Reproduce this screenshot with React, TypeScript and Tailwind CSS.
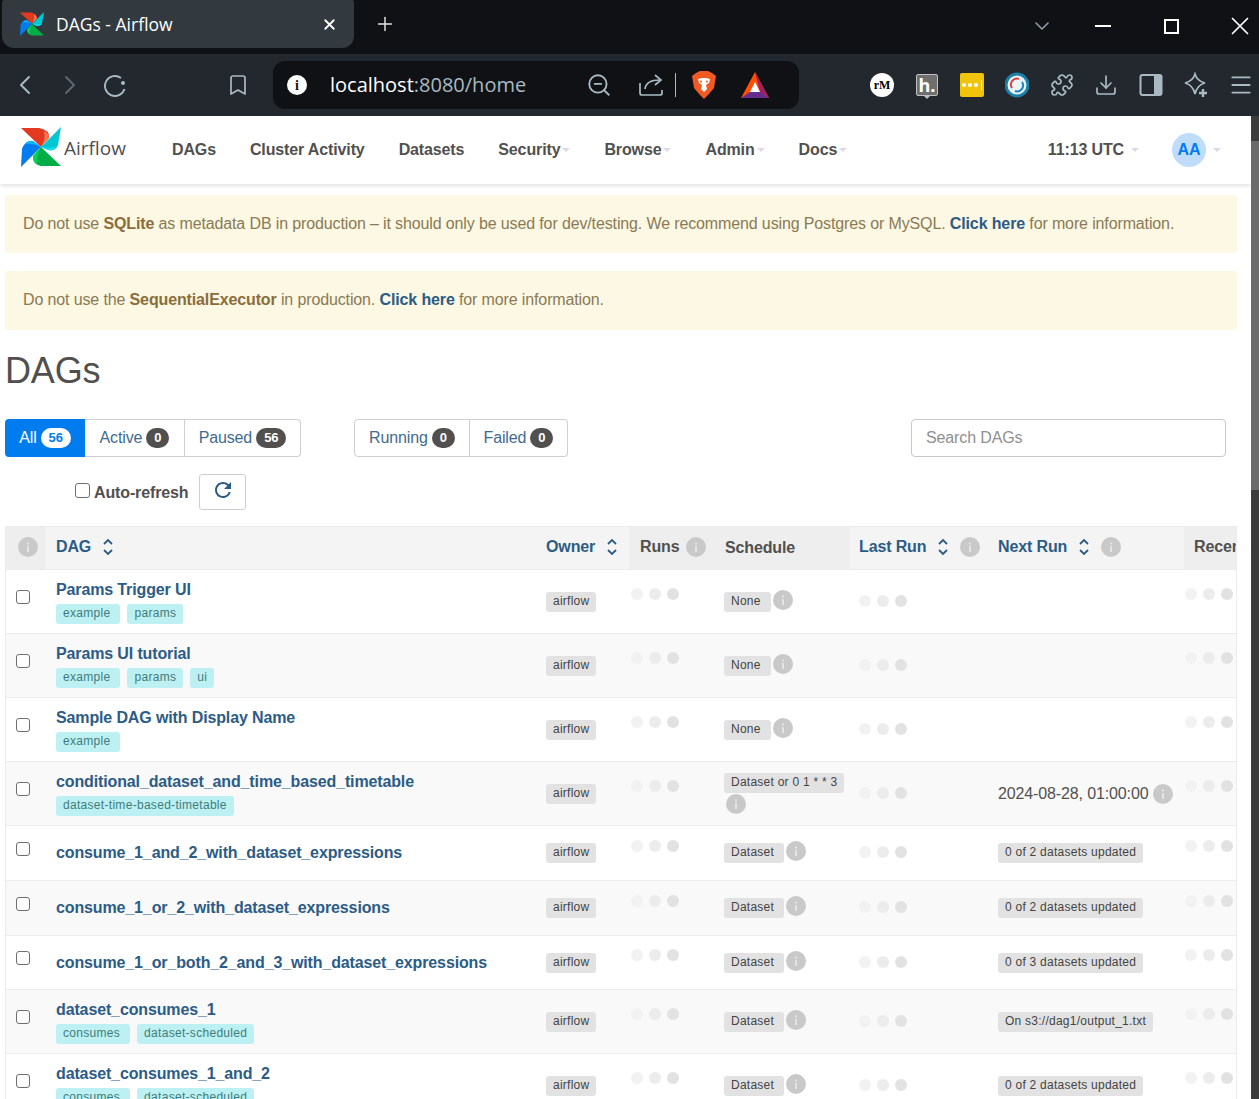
import { Plus, X, ChevronLeft, ChevronRight, ChevronDown, Bookmark, ZoomOut, Puzzle, Download, Menu } from 'lucide-react'

const ROWS = [
  { name: 'Params Trigger UI', tags: ['example', 'params'], schedule: 'None', h: 'h-[64px]' },
  { name: 'Params UI tutorial', tags: ['example', 'params', 'ui'], schedule: 'None', h: 'h-[64px]' },
  { name: 'Sample DAG with Display Name', tags: ['example'], schedule: 'None', h: 'h-[64px]' },
  { name: 'conditional_dataset_and_time_based_timetable', tags: ['dataset-time-based-timetable'], schedule: 'Dataset or 0 1 * * 3', next: '2024-08-28, 01:00:00', h: 'h-[64px]' },
  { name: 'consume_1_and_2_with_dataset_expressions', tags: [], schedule: 'Dataset', nextLabel: '0 of 2 datasets updated', h: 'h-[55px]' },
  { name: 'consume_1_or_2_with_dataset_expressions', tags: [], schedule: 'Dataset', nextLabel: '0 of 2 datasets updated', h: 'h-[55px]' },
  { name: 'consume_1_or_both_2_and_3_with_dataset_expressions', tags: [], schedule: 'Dataset', nextLabel: '0 of 3 datasets updated', h: 'h-[54px]' },
  { name: 'dataset_consumes_1', tags: ['consumes', 'dataset-scheduled'], schedule: 'Dataset', nextLabel: 'On s3://dag1/output_1.txt', h: 'h-[64px]' },
  { name: 'dataset_consumes_1_and_2', tags: ['consumes', 'dataset-scheduled'], schedule: 'Dataset', nextLabel: '0 of 2 datasets updated', h: 'h-[64px]' },
]

const COLS = 'grid grid-cols-[40px_490px_94px_85px_134px_139px_196px_1fr]'

function Pinwheel({ size }: { size: number }) {
  return (
    <svg width={size} height={size} viewBox="0 0 40 40" className="shrink-0">
      <path d="M0 1 L18 1 Q29 3 28 11 L20 20 Z" fill="#e43921" />
      <path d="M20 20 L28 11 Q28 6 23 4 Q25 12 20 20 Z" fill="#ff7557" />
      <path d="M40 0 L37 18 Q34 25 27 23 L20 20 Z" fill="#00c7d4" />
      <path d="M20 20 L27 23 Q33 24 36 20 Q28 22 20 20 Z" fill="#11e1ee" />
      <path d="M0 40 L1 22 Q4 13 12 14 L20 20 Z" fill="#017cee" />
      <path d="M20 20 L12 14 Q7 13 4 17 Q12 16 20 20 Z" fill="#0cb6ff" />
      <path d="M40 39 L20 39 Q11 37 12 29 L20 20 Z" fill="#00ad46" />
      <path d="M20 20 L12 29 Q12 34 16 37 Q15 28 20 20 Z" fill="#04d659" />
    </svg>
  )
}

function Info() {
  return (
    <svg width="20" height="20" viewBox="0 0 20 20" className="shrink-0">
      <circle cx="10" cy="10" r="10" fill="#c9c9c9" />
      <rect x="9" y="9" width="2" height="6" fill="#e4e4e4" />
      <rect x="9" y="5.5" width="2" height="2" fill="#e4e4e4" />
    </svg>
  )
}

function Sort() {
  return (
    <svg width="12" height="20" viewBox="0 0 12 20" className="shrink-0" fill="none" stroke="#2c5c86" strokeWidth="1.8">
      <path d="M2 7 L6 3 L10 7" />
      <path d="M2 13 L6 17 L10 13" />
    </svg>
  )
}

function Caret() {
  return <span className="ml-[2px] inline-block h-0 w-0 border-x-[4px] border-t-[4px] border-x-transparent border-t-[#e0d8e6]" />
}

function Dots() {
  return (
    <div className="flex gap-[6px]">
      <span className="h-3 w-3 rounded-full bg-[#f2f2f2]" />
      <span className="h-3 w-3 rounded-full bg-[#ececec]" />
      <span className="h-3 w-3 rounded-full bg-[#e2e2e2]" />
    </div>
  )
}

function Label({ text, extra }: { text: string; extra?: boolean }) {
  return (
    <span className={`inline-block h-5 whitespace-nowrap rounded-[3px] bg-[#e2e2e2] pl-[7px] text-[12px] leading-[19px] tracking-[0.25px] text-[#444] ${extra ? 'pr-[10px]' : 'pr-[7px]'}`}>
      {text}
    </span>
  )
}

function Count({ value, light }: { value: number; light?: boolean }) {
  return (
    <span className={`ml-1 inline-block h-5 rounded-full px-[8px] text-[13px] font-bold leading-5 ${light ? 'bg-white text-[#017cee]' : 'bg-[#51504f] text-white'}`}>
      {value}
    </span>
  )
}

function FilterButton({ text, value, active, className }: { text: string; value: number; active?: boolean; className: string }) {
  return (
    <div className={`flex h-[38px] items-center justify-center text-[16px] ${active ? 'bg-[#017cee] text-white' : 'border-y border-[#cfcfcf] text-[#3f6b90]'} ${className}`}>
      {text}
      <Count value={value} light={active} />
    </div>
  )
}

function Tab() {
  return (
    <div className="flex h-[54px] items-start bg-[#0f1115] text-white">
      <div className="ml-[2px] flex h-[48px] w-[352px] items-center rounded-b-[12px] rounded-t-[2px] bg-[#32393f] pl-[18px] pr-[16px]">
        <Pinwheel size={24} />
        <span className="ml-[12px] flex-1 text-[17.5px]">DAGs - Airflow</span>
        <X size={17} strokeWidth={2.6} />
      </div>
      <Plus size={22} strokeWidth={1.6} className="ml-[20px] mt-[13px] text-[#e6e6e6]" />
      <div className="ml-auto flex items-center pt-[11px]">
        <ChevronDown size={24} strokeWidth={1.6} className="mr-[41px] text-[#8e9aa3]" />
        <span className="mr-[53px] h-[2px] w-4 bg-white" />
        <span className="mr-[46px] h-[15px] w-[15px] border-2 border-white" />
        <X size={30} strokeWidth={1.4} className="mr-[4px]" />
      </div>
    </div>
  )
}

function BraveIcon() {
  return (
    <svg width="24" height="28" viewBox="0 0 24 28">
      <path d="M4 2 L8 0 H16 L20 2 L24 5 L22 17 L16 24 L12 28 L8 24 L2 17 L0 5 Z" fill="#f15a22" />
      <path d="M6 8 L10 7 H14 L18 8 L17 12 L14 14 L15 18 L12 21 L9 18 L10 14 L7 12 Z" fill="#fff" />
      <circle cx="9" cy="10.5" r="1" fill="#f15a22" />
      <circle cx="15" cy="10.5" r="1" fill="#f15a22" />
    </svg>
  )
}

function BatIcon() {
  return (
    <svg width="28" height="26" viewBox="0 0 28 26">
      <path d="M14 0 L28 26 H0 Z" fill="#ff5000" />
      <path d="M14 0 L28 26 L19 20 Z" fill="#9e1f63" />
      <path d="M0 26 L9 20 H19 L28 26 Z" fill="#662d91" />
      <path d="M14 10 L19 20 H9 Z" fill="#fff" />
    </svg>
  )
}

function SidebarIcon() {
  return (
    <svg width="24" height="24" viewBox="0 0 24 24">
      <rect x="1.5" y="2" width="21" height="20" rx="2" fill="none" stroke="#a9bac3" strokeWidth="2" />
      <rect x="15" y="2" width="8" height="20" rx="1" fill="#a9bac3" />
    </svg>
  )
}

function SparkIcon() {
  return (
    <svg width="26" height="26" viewBox="0 0 26 26" fill="none" stroke="#a9bac3" strokeWidth="1.7" className="-ml-[1px]">
      <path d="M12 2 Q14 9 22 11 Q14 13 12 22 Q10 13 2 11 Q10 9 12 2 Z" />
      <path d="M20 17 V25 M16 21 H24" strokeWidth="2.4" />
    </svg>
  )
}

function ReloadIcon() {
  return (
    <svg width="24" height="24" viewBox="0 0 24 24" fill="none" stroke="#a9bac3" strokeWidth="1.9" className="ml-[17px]">
      <path d="M18 5 A10 10 0 1 0 21.5 16" />
      <circle cx="20" cy="10" r="2" fill="#a9bac3" stroke="none" />
    </svg>
  )
}

function ShareIcon() {
  return (
    <svg width="26" height="24" viewBox="0 0 26 24" fill="none" stroke="#a9bac3" strokeWidth="1.7" className="ml-[26px]">
      <path d="M2 10 V20 Q2 22 4 22 H22 Q24 22 24 20 V17" />
      <path d="M7 16 Q8 7 22 7" />
      <path d="M17 2 L23 7 L17 12" />
    </svg>
  )
}

function Toolbar() {
  return (
    <div className="flex h-[62px] items-center bg-[#22282d] text-[#a9bac3]">
      <ChevronLeft size={32} strokeWidth={1.5} className="ml-[9px]" />
      <ChevronRight size={32} strokeWidth={1.5} className="ml-[13px] text-[#5d6870]" />
      <ReloadIcon />
      <Bookmark size={24} strokeWidth={1.7} className="ml-[99px]" />
      <div className="ml-[23px] flex h-[48px] w-[526px] items-center rounded-[12px] bg-[#0f1115] pl-[14px]">
        <span className="flex h-5 w-5 items-center justify-center rounded-full bg-white font-['Liberation_Serif',serif] text-[14px] font-bold text-[#0f1115]">i</span>
        <span className="ml-[23px] w-[256px] text-[20px] text-[#a9bac3]"><span className="text-white">localhost</span>:8080/home</span>
        <ZoomOut size={26} strokeWidth={1.7} />
        <ShareIcon />
        <span className="ml-[11px] h-6 w-px bg-[#a9bac3]" />
        <span className="ml-[16px]"><BraveIcon /></span>
        <span className="ml-[25px]"><BatIcon /></span>
      </div>
      <div className="ml-[71px] flex items-center gap-[21px]">
        <span className="flex h-6 w-6 items-center justify-center rounded-full bg-white font-['Liberation_Serif',serif] text-[12px] font-bold text-black">rM</span>
        <span className="relative mx-px flex h-[22px] w-[22px] items-center justify-center rounded-[2px] border border-[#c0c0c0] bg-[#6f6f6f] text-[18px] font-bold text-white">
          h.
          <i className="absolute -bottom-[4px] left-[7px] h-0 w-0 border-x-[3px] border-t-[3px] border-x-transparent border-t-[#c0c0c0]" />
        </span>
        <span className="flex h-6 w-6 items-center justify-center gap-[2px] rounded-[2px] bg-[#f0c40c]">
          <i className="h-1 w-1 rounded-full bg-white" />
          <i className="h-1 w-1 rounded-full bg-white" />
          <i className="h-1 w-1 rounded-full bg-white" />
          <i className="ml-[1px] h-[10px] w-px bg-white" />
        </span>
        <svg width="24" height="26" viewBox="0 0 24 26" fill="none">
          <circle cx="12" cy="13" r="11" fill="#e8f4f8" stroke="#1b7fa8" strokeWidth="3" />
          <path d="M7 16 A6 6 0 0 1 14 7" stroke="#d8433b" strokeWidth="2" />
          <path d="M17 10 A6 6 0 0 1 10 19" stroke="#1f83c4" strokeWidth="2" />
        </svg>
        <Puzzle size={24} strokeWidth={1.7} />
        <Download size={24} strokeWidth={1.7} className="-ml-[1px]" />
        <SidebarIcon />
        <SparkIcon />
        <Menu size={26} strokeWidth={1.7} className="-ml-[2px]" />
      </div>
    </div>
  )
}

function NavBar() {
  const items = [['DAGs'], ['Cluster Activity'], ['Datasets'], ['Security', 1], ['Browse', 1], ['Admin', 1], ['Docs', 1]] as const
  return (
    <div className="flex h-[68px] items-center bg-white shadow-[0_2px_4px_rgba(0,0,0,0.12)]">
      <div className="ml-[21px] flex w-[151px] items-center">
        <span className="mb-[6px]"><Pinwheel size={40} /></span>
        <span className="mb-[3px] ml-[3px] font-['Open_Sans',sans-serif] text-[19px] tracking-normal text-[#51504f]">Airflow</span>
      </div>
      <div className="flex items-center gap-[34px] text-[16px] font-bold text-[#51504f]">
        {items.map(([t, c]) => (
          <span key={t} className="flex items-center">{t}{c && <Caret />}</span>
        ))}
      </div>
      <span className="ml-auto flex items-center text-[16px] font-bold text-[#51504f]">11:13 UTC<span className="ml-[5px] flex"><Caret /></span></span>
      <span className="ml-[33px] flex h-[34px] w-[34px] items-center justify-center rounded-full bg-[#bfdcfb] text-[16px] font-bold text-[#017cee]">AA</span>
      <span className="ml-[5px] mr-[30px] flex"><Caret /></span>
    </div>
  )
}

function Alert({ className, children }: { className: string; children: React.ReactNode }) {
  return (
    <div className={`mx-[5px] flex w-[1232px] items-center rounded-[4px] bg-[#fcf8e3] pl-[18px] text-[16px] text-[#8a7a55] ${className}`}>
      <p>{children}</p>
    </div>
  )
}

function Th({ text, sort, info, dark, className }: { text: string; sort?: boolean; info?: boolean; dark?: boolean; className?: string }) {
  return (
    <div className={`flex items-center overflow-hidden pl-[10px] text-[16px] font-bold ${dark ? 'bg-[#eeeeee] text-[#51504f]' : 'text-[#2c5c86]'} ${className ?? ''}`}>
      <span className="mb-[2px] flex items-center whitespace-nowrap">
        {text}
        {sort && <span className="ml-[11px]"><Sort /></span>}
        {info && <span className={sort ? 'ml-[11px]' : 'ml-[7px]'}><Info /></span>}
      </span>
    </div>
  )
}

function DagRow({ row, even }: { row: (typeof ROWS)[number]; even: boolean }) {
  return (
    <div className={`${COLS} ${row.h} border-b border-[#ececec] ${even ? 'bg-[#f9f9f9]' : 'bg-white'}`}>
      <div className="flex items-center pl-[10px]">
        <span className="mb-[9px] h-[14px] w-[14px] rounded-[3px] border border-[#6f6f6f] bg-white" />
      </div>
      <div className="flex flex-col justify-center pl-[10px]">
        <div className="text-[16px] font-bold leading-[20px] text-[#2c5c86]">{row.name}</div>
        {row.tags.length > 0 && (
          <div className="mt-[4px] flex gap-[7px]">
            {row.tags.map(t => (
              <span key={t} className={`h-5 rounded-[3px] bg-[#bdf0f2] pl-[7px] text-[12px] leading-[19px] tracking-[0.3px] text-[#3f7d7c] ${t === 'example' || t === 'consumes' ? 'pr-[10px]' : 'pr-[7px]'}`}>{t}</span>
            ))}
          </div>
        )}
      </div>
      <div className="flex items-center pl-[10px]">
        <Label text="airflow" />
      </div>
      <div className="flex items-center pl-[1px]">
        <div className="mb-[15px]"><Dots /></div>
      </div>
      <div className="flex flex-wrap content-center items-center pl-[9px]">
        <Label text={row.schedule} extra={row.schedule.length < 10} />
        <span className={row.schedule.length < 10 ? 'mb-[4px] ml-[2px]' : 'ml-[2px] mt-[1px]'}><Info /></span>
      </div>
      <div className="flex items-center pl-[10px]">
        <div className="mb-[2px]"><Dots /></div>
      </div>
      <div className="flex items-center pl-[10px]">
        {row.next && (
          <span className="flex items-center whitespace-nowrap text-[16px] text-[#51504f]">
            {row.next}
            <span className="ml-[5px]"><Info /></span>
          </span>
        )}
        {row.nextLabel && <Label text={row.nextLabel} />}
      </div>
      <div className="flex items-center pl-[1px]">
        <div className="mb-[15px]"><Dots /></div>
      </div>
    </div>
  )
}

export default function App() {
  return (
    <div className="flex h-[1099px] flex-col overflow-hidden bg-white font-['Open_Sans',sans-serif]">
      <Tab />
      <Toolbar />
      <div className="flex min-h-0 flex-1 font-['Liberation_Sans',Arial,sans-serif] tracking-[-0.13px]">
        <main className="min-w-0 flex-1 overflow-hidden">
          <NavBar />
          <Alert className="mt-[11px] h-[58px]">
            Do not use <strong className="text-[#8a6d3b]">SQLite</strong> as metadata DB in production – it should only be used for dev/testing. We recommend using Postgres or MySQL. <strong className="text-[#2c5c86]">Click here</strong> for more information.
          </Alert>
          <Alert className="mt-[18px] h-[59px] pb-[2px]">
            Do not use the <strong className="text-[#8a6d3b]">SequentialExecutor</strong> in production. <strong className="text-[#2c5c86]">Click here</strong> for more information.
          </Alert>
          <h1 className="ml-[5px] mt-[21px] h-[40px] text-[36px] leading-[40px] text-[#51504f]">DAGs</h1>

          <div className="ml-[5px] mt-[28px] flex items-center">
            <div className="flex">
              <FilterButton text="All" value={56} active className="w-[80px] rounded-l-[4px]" />
              <FilterButton text="Active" value={0} className="w-[100px] border-r" />
              <FilterButton text="Paused" value={56} className="w-[116px] rounded-r-[4px] border-r" />
            </div>
            <div className="ml-[53px] flex">
              <FilterButton text="Running" value={0} className="w-[116px] rounded-l-[4px] border-x" />
              <FilterButton text="Failed" value={0} className="w-[98px] rounded-r-[4px] border-r" />
            </div>
            <div className="ml-[343px] flex h-[38px] w-[315px] items-center rounded-[4px] border border-[#c8c8c8] pl-[14px] text-[16px] text-[#8f8f8f]">
              Search DAGs
            </div>
          </div>

          <div className="ml-[75px] mt-[17px] flex items-center">
            <span className="mb-[3px] h-[15px] w-[15px] rounded-[3px] border border-[#6f6f6f]" />
            <span className="ml-[4px] mt-[2px] text-[16px] font-bold text-[#51504f]">Auto-refresh</span>
            <span className="ml-[11px] flex h-[36px] w-[47px] items-center justify-center rounded-[3px] border border-[#cfcfcf] pb-[5px]">
              <svg width="24" height="24" viewBox="0 0 24 24" fill="#2c5c86">
                <path d="M17.65 6.35A7.958 7.958 0 0 0 12 4c-4.42 0-7.99 3.58-7.99 8s3.57 8 7.99 8c3.73 0 6.84-2.55 7.73-6h-2.08A5.99 5.99 0 0 1 12 18c-3.31 0-6-2.69-6-6s2.69-6 6-6c1.66 0 3.14.69 4.22 1.78L13 11h7V4l-2.35 2.35z" />
              </svg>
            </span>
          </div>

          <div className="ml-[5px] mt-[16px] w-[1232px] overflow-hidden border-l border-r border-t border-[#ececec]">
            <div className={`${COLS} h-[43px] border-b border-[#ececec] bg-[#f4f4f4]`}>
              <div className="flex items-center bg-[#eeeeee] pl-[12px]"><span className="mb-[2px]"><Info /></span></div>
              <Th text="DAG" sort />
              <Th text="Owner" sort />
              <Th text="Runs" info dark />
              <Th text="Schedule" dark className="[&>span]:mb-0" />
              <Th text="Last Run" sort info />
              <Th text="Next Run" sort info />
              <Th text="Recent Tasks" dark />
            </div>
            {ROWS.map((row, i) => (
              <DagRow key={row.name} row={row} even={i % 2 === 1} />
            ))}
          </div>
        </main>
        <aside className="flex w-[8px] flex-col bg-[#3c3c3c]">
          <div className="mt-[25px] h-[349px] bg-[#6b6b6b]" />
        </aside>
      </div>
    </div>
  )
}
